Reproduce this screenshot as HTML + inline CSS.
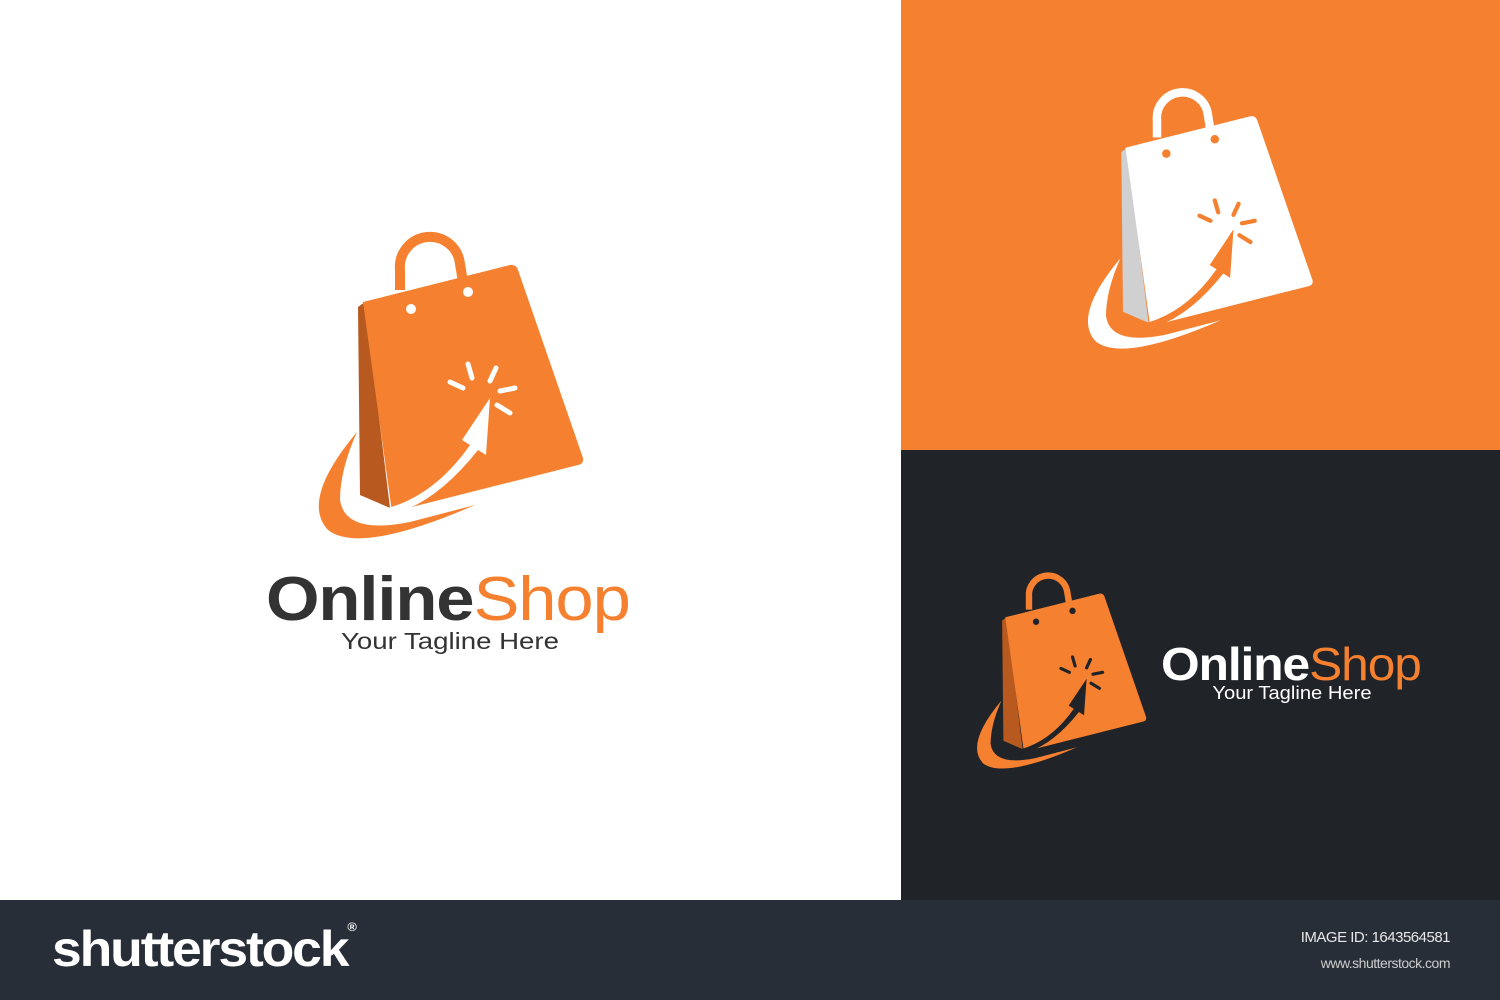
<!DOCTYPE html>
<html><head><meta charset="utf-8"><style>
body{margin:0;width:1500px;height:1000px;position:relative;overflow:hidden;font-family:"Liberation Sans","DejaVu Sans",sans-serif;background:#fff}
.abs{position:absolute}
</style></head><body>
<div class="abs" style="left:901px;top:0;width:599px;height:450px;background:#f58130"></div>
<div class="abs" style="left:901px;top:450px;width:599px;height:450px;background:#202327"></div>
<div class="abs" style="left:0;top:900px;width:1500px;height:100px;background:#282e38"></div>

<svg class="abs" style="left:0;top:0" width="1500" height="900" viewBox="0 0 1500 900">
<defs>
<g id="bag">
<path d="M400 290 L400 270 A30 30 0 0 1 460 264 L463 282" fill="none" stroke="var(--c)" stroke-width="10"/>
<path d="M358 307 L365 302 L390 508 L360 495 Z" fill="var(--d)"/>
<path d="M363 302 L510 265 Q516 264 518 270 L583 458 Q584 464 578 465 L392 512 Z" fill="var(--c)"/>
<circle cx="411" cy="309" r="5" fill="var(--h)"/>
<circle cx="468" cy="292" r="5" fill="var(--h)"/>
<path d="M357 432 Q300 500 328 530 Q360 555 475 505 L410 522 Q345 535 340 500 Q340 470 357 432 Z" fill="var(--c)"/>
<path d="M348 495 Q358 520 400 504 Q440 488 470 445 L462 440 L490 398 L486 455 L478 450 Q440 498 400 512 Q350 528 348 495 Z" fill="var(--h)"/>
<g stroke="var(--h)" stroke-width="5" stroke-linecap="round">
<line x1="468" y1="364" x2="472" y2="378"/><line x1="496" y1="368" x2="490" y2="381"/>
<line x1="450" y1="382" x2="463" y2="388"/><line x1="500" y1="391" x2="515" y2="388"/>
<line x1="497" y1="405" x2="510" y2="413"/>
</g>
</g>
</defs>
<g style="--c:#f58130;--d:#b85a20;--h:#fff"><use href="#bag"/></g>
<g style="--c:#fff;--d:#d0d0d0;--h:#f58130" transform="translate(817,-109) scale(0.85)"><use href="#bag"/></g>
<g style="--c:#f58130;--d:#b85a20;--h:#202327" transform="translate(773,424) scale(0.64)"><use href="#bag"/></g>
</svg>

<div class="abs" style="left:266px;top:560px;font-size:62px;letter-spacing:-1px;line-height:80px;transform:scaleX(1.11);transform-origin:0 0;white-space:nowrap"><span style="color:#333;font-weight:bold">Online</span><span style="color:#f58130">Shop</span></div>
<div class="abs" style="left:300px;top:628px;width:300px;text-align:center;font-size:23px;color:#333;transform:scaleX(1.2)">Your Tagline Here</div>

<div class="abs" style="left:1161px;top:634px;font-size:46px;letter-spacing:-1px;line-height:60px;transform:scaleX(1.08);transform-origin:0 0;white-space:nowrap"><span style="color:#fff;font-weight:bold">Online</span><span style="color:#f58130">Shop</span></div>
<div class="abs" style="left:1192px;top:683px;width:200px;text-align:center;font-size:18px;color:#fff;transform:scaleX(1.12)">Your Tagline Here</div>

<div class="abs" style="left:52px;top:920px;font-size:50px;font-weight:bold;color:#fff;letter-spacing:-2px;transform:scaleX(1.07);transform-origin:0 0;white-space:nowrap">shutterstock<span style="font-size:12px;vertical-align:top">®</span></div>
<div class="abs" style="left:1250px;top:929px;width:200px;text-align:right;font-size:15px;color:#e8e8e8;letter-spacing:-0.5px">IMAGE ID: 1643564581</div>
<div class="abs" style="left:1250px;top:955px;width:200px;text-align:right;font-size:14px;color:#ccc;letter-spacing:-0.5px">www.shutterstock.com</div>
</body></html>
